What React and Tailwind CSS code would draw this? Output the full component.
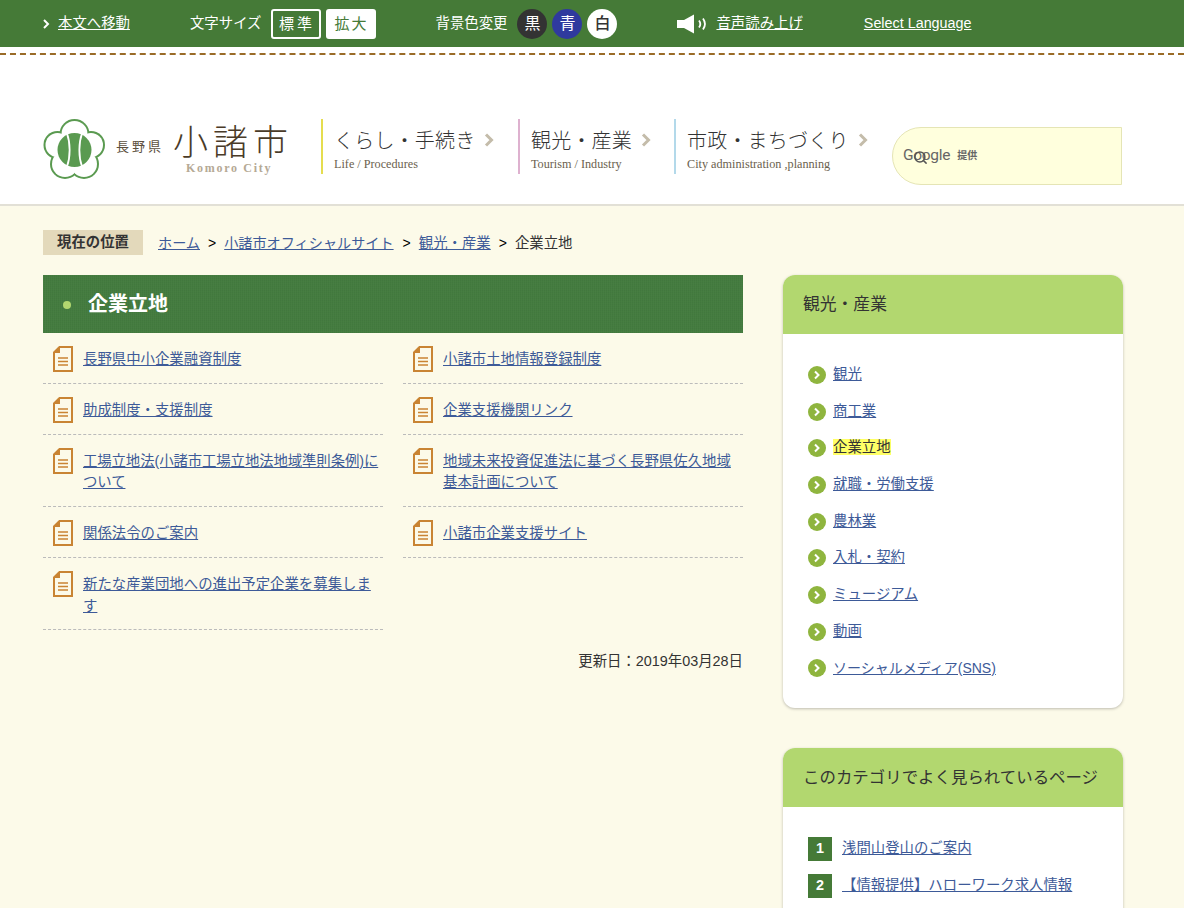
import React from 'react';
import { Search } from 'lucide-react';

const FONT = "font-['Liberation_Sans','Noto_Sans_CJK_JP',sans-serif]";
const LINK = 'text-[#3d5a98] underline';

const leftLinks = [
  ['長野県中小企業融資制度', '小諸市土地情報登録制度'],
  ['助成制度・支援制度', '企業支援機関リンク'],
  ['工場立地法(小諸市工場立地法地域準則条例)について', '地域未来投資促進法に基づく長野県佐久地域基本計画について'],
  ['関係法令のご案内', '小諸市企業支援サイト'],
  ['新たな産業団地への進出予定企業を募集します', null],
];

const sideLinks = ['観光', '商工業', '企業立地', '就職・労働支援', '農林業', '入札・契約', 'ミュージアム', '動画', 'ソーシャルメディア(SNS)'];

const petals = [
  [31.5, 15, 14],
  [14.5, 26, 13],
  [48, 26, 13],
  [22, 45, 14],
  [41, 45, 14],
];

const DocIcon = () => (
  <svg width="20" height="26" viewBox="0 0 20 26" className="absolute left-[10px] top-[13px]">
    <path d="M6.5 1H19V25H1V6.5Z" fill="#fcfae9" stroke="#c98433" strokeWidth="2" />
    <path d="M7 1V7H1Z" fill="#c98433" />
    <path d="M5 12H15M5 15.5H15M5 19H15" stroke="#c98433" strokeWidth="1.4" />
  </svg>
);

const Emblem = () => (
  <svg width="62" height="60" viewBox="0 0 62 60" className="shrink-0">
    {petals.map(([cx, cy, r]) => (
      <circle key={cx} cx={cx} cy={cy} r={r + 1} fill="#5a9a50" />
    ))}
    {petals.map(([cx, cy, r]) => (
      <circle key={cx} cx={cx} cy={cy} r={r - 1} fill="#fff" />
    ))}
    <circle cx="31.5" cy="31" r="15" fill="#fff" />
    <circle cx="31.5" cy="31" r="17" fill="#5a9a50" />
    <path d="M24 14.5C27.5 24 27.5 38 24 47.5M39 14.5C35.5 24 35.5 38 39 47.5" fill="none" stroke="#fff" strokeWidth="1.8" />
  </svg>
);

const Chevron = () => (
  <svg width="10" height="14" viewBox="0 0 10 14" className="shrink-0">
    <path d="M2 1.5L7.5 7L2 12.5" fill="none" stroke="#c4bcaa" strokeWidth="3" />
  </svg>
);

const NavItem = ({ title, sub, borderClass, widthClass }) => (
  <div className={`h-[55px] border-l-2 pl-[11px] ${borderClass} ${widthClass}`}>
    <div className="flex h-[39px] items-center gap-[9px] pt-[2px]">
      <span className="font-['Noto_Sans_CJK_JP',sans-serif] text-[20px] font-light text-[#333] leading-none tracking-[0.2px]">{title}</span>
      <Chevron />
    </div>
    <p className="font-['Liberation_Serif',serif] text-[12.2px] leading-[13px] text-[#6b5f4e]">{sub}</p>
  </div>
);

const SideCard = ({ title, titleClass, children, className }) => (
  <section className={`rounded-[12px] bg-white shadow-[0_1px_3px_rgba(0,0,0,0.25)] ${className}`}>
    <h2 className={`flex h-[59px] items-center rounded-t-[12px] bg-[#b2d76f] pl-5 pt-[1px] font-normal text-[#333] ${titleClass}`}>{title}</h2>
    {children}
  </section>
);

export default function App() {
  return (
    <div className={`h-[908px] w-[1184px] overflow-hidden bg-[#fcfae9] text-[14.4px] leading-[21.6px] text-[#333] ${FONT}`}>
      {/* top tool bar */}
      <div className="flex h-[47px] items-center bg-[#457a37] pl-[43px] text-white">
        <svg width="8" height="10" viewBox="0 0 8 10" className="mr-[7px]">
          <path d="M1 1L5 5L1 9" fill="none" stroke="#fff" strokeWidth="2" />
        </svg>
        <a className="underline">本文へ移動</a>
        <span className="ml-[60px]">文字サイズ</span>
        <span className="ml-[9px] flex h-[30px] w-[50px] items-center justify-center rounded-[3px] border-2 border-white pl-[3px] text-[15px] tracking-[3px]">標準</span>
        <span className="ml-[5px] flex h-[30px] w-[50px] items-center justify-center rounded-[3px] bg-white pl-[2px] text-[15px] tracking-[2px] text-[#457a37]">拡大</span>
        <span className="ml-[60px]">背景色変更</span>
        <span className="ml-[10px] flex h-[30px] w-[30px] items-center justify-center rounded-full bg-[#333] text-[16px]">黒</span>
        <span className="ml-[5px] flex h-[30px] w-[30px] items-center justify-center rounded-full bg-[#2f3a9e] text-[16px]">青</span>
        <span className="ml-[5px] flex h-[30px] w-[30px] items-center justify-center rounded-full bg-white text-[16px] font-medium text-[#333]">白</span>
        <svg width="30" height="20" viewBox="0 0 30 20" className="ml-[60px] mr-[9px]">
          <path d="M0 6H7L17 0.5V19.5L7 14H0Z" fill="#fff" />
          <path d="M22 6.5C23.5 8.5 23.5 11.5 22 13.5M26 4.5C28.5 8 28.5 12 26 15.5" fill="none" stroke="#fff" strokeWidth="1.8" />
        </svg>
        <a className="underline">音声読み上げ</a>
        <a className="ml-[61px] text-[14.35px] underline">Select Language</a>
      </div>

      {/* site header */}
      <header className="h-[159px] border-b-2 border-[#e2e0d6] bg-white pt-[6px]">
        <div className="h-[2px] border-t-2 border-dashed border-[#9a6b27]" />
        <div className="flex items-start pl-[43px] pt-[64px]">
          <Emblem />
          <div className="ml-[11px] flex w-[205px] shrink-0 items-start">
            <span className="mt-[17px] text-[13px] tracking-[3px] text-[#5c4f3d]">長野県</span>
            <div className="ml-[9px]">
              <p className="mt-[3px] font-['Noto_Sans_CJK_JP',sans-serif] text-[35px] font-light leading-[36px] tracking-[5px] text-[#4a3b28]">小諸市</p>
              <p className="ml-[13px] mt-[3px] font-['Liberation_Serif',serif] text-[12px] font-bold leading-[14px] tracking-[1.7px] text-[#b5a995]">Komoro City</p>
            </div>
          </div>
          <NavItem title="くらし・手続き" sub="Life / Procedures" borderClass="border-[#e5dd4f]" widthClass="w-[197px]" />
          <NavItem title="観光・産業" sub="Tourism / Industry" borderClass="border-[#deb1cf]" widthClass="w-[156px]" />
          <NavItem title="市政・まちづくり" sub="City administration ,planning" borderClass="border-[#b3d9ea]" widthClass="w-[218px]" />
          <div className="mt-[8px] flex h-[58px] w-[230px] items-center rounded-l-full border border-[#e5e5b5] bg-[#ffffdd] pl-[10px] text-[#666]">
            <span className="relative font-['Roboto',sans-serif] text-[15.5px] leading-none tracking-[-0.3px]">
              Google
              <Search size={15} strokeWidth={2.4} className="absolute left-[10px] top-[2px] text-[#555]" />
            </span>
            <span className="ml-[7px] text-[10px] font-bold">提供</span>
          </div>
        </div>
      </header>

      <div className="ml-[43px] w-[1080px]">
        {/* breadcrumb */}
        <div className="mt-[24px] flex h-[25px] items-start">
          <span className="flex h-[25px] w-[100px] items-center justify-center bg-[#e3d9bb] pt-[1px] text-[14.4px] font-bold">現在の位置</span>
          <div className="flex items-center pt-[3px] text-[14.15px]">
            <a className={`ml-[15px] ${LINK}`}>ホーム</a>
            <span className="mx-[8px] text-[14px] text-black">&gt;</span>
            <a className={LINK}>小諸市オフィシャルサイト</a>
            <span className="ml-[9px] mr-[8px] text-[14px] text-black">&gt;</span>
            <a className={`text-[14.4px] ${LINK}`}>観光・産業</a>
            <span className="mx-[8px] text-[14px] text-black">&gt;</span>
            <span className="text-[14.4px]">企業立地</span>
          </div>
        </div>

        <div className="mt-[20px] flex items-start gap-10">
          {/* main column */}
          <main className="w-[700px] shrink-0">
            <h1 className="flex h-[58px] items-center bg-[#437b3e] bg-[repeating-linear-gradient(90deg,rgba(255,255,255,0.025)_0_1px,transparent_1px_2px),repeating-linear-gradient(0deg,rgba(0,0,0,0.025)_0_1px,transparent_1px_2px)] pl-[20px] pt-[1px] text-[20px] font-bold text-white">
              <span className="mr-[17px] h-[8px] w-[8px] rounded-full bg-[#b2d76f]" />
              企業立地
            </h1>
            <div className="grid grid-cols-2 gap-x-5">
              {leftLinks.flat().map((label, i) =>
                label ? (
                  <div key={i} className="relative border-b border-dashed border-[#bbb] pb-[12px] pl-[40px] pt-[16.2px]">
                    <DocIcon />
                    <a className={`${LINK} ${label.startsWith('工場') ? 'tracking-[-0.1px]' : ''}`}>{label}</a>
                  </div>
                ) : (
                  <div key={i} />
                )
              )}
            </div>
            <p className="mt-[21px] text-right">更新日：2019年03月28日</p>
          </main>

          {/* side column */}
          <aside className="w-[340px] shrink-0">
            <SideCard title="観光・産業" titleClass="text-[16.8px]">
              <ul className="px-[25px] py-[22px]">
                {sideLinks.map((label) => (
                  <li key={label} className="flex h-[36.7px] items-center pt-[1px]">
                    <span className="mr-[7px] flex h-[18px] w-[18px] items-center justify-center rounded-full bg-[#8fb53e]">
                      <svg width="8" height="10" viewBox="0 0 8 10">
                        <path d="M2 1.5L5.5 5L2 8.5" fill="none" stroke="#fff" strokeWidth="2" />
                      </svg>
                    </span>
                    {label === '企業立地' ? (
                      <span>
                        <span className="bg-[#ffff66]">{label}</span>
                      </span>
                    ) : (
                      <a className={`${LINK} ${label.includes('SNS') ? 'text-[14px]' : ''}`}>{label}</a>
                    )}
                  </li>
                ))}
              </ul>
            </SideCard>
            <SideCard title="このカテゴリでよく見られているページ" titleClass="text-[16.45px]" className="mt-[40px] h-[300px]">
              <ol className="px-[25px] pt-[30px]">
                {['浅間山登山のご案内', '【情報提供】ハローワーク求人情報'].map((label, i) => (
                  <li key={label} className="mb-[13px] flex h-[24px] items-center">
                    <span className="mr-[10px] flex h-[24px] w-[24px] items-center justify-center bg-[#457a37] font-bold text-white">{i + 1}</span>
                    <a className={LINK}>{label}</a>
                  </li>
                ))}
              </ol>
            </SideCard>
          </aside>
        </div>
      </div>
    </div>
  );
}
